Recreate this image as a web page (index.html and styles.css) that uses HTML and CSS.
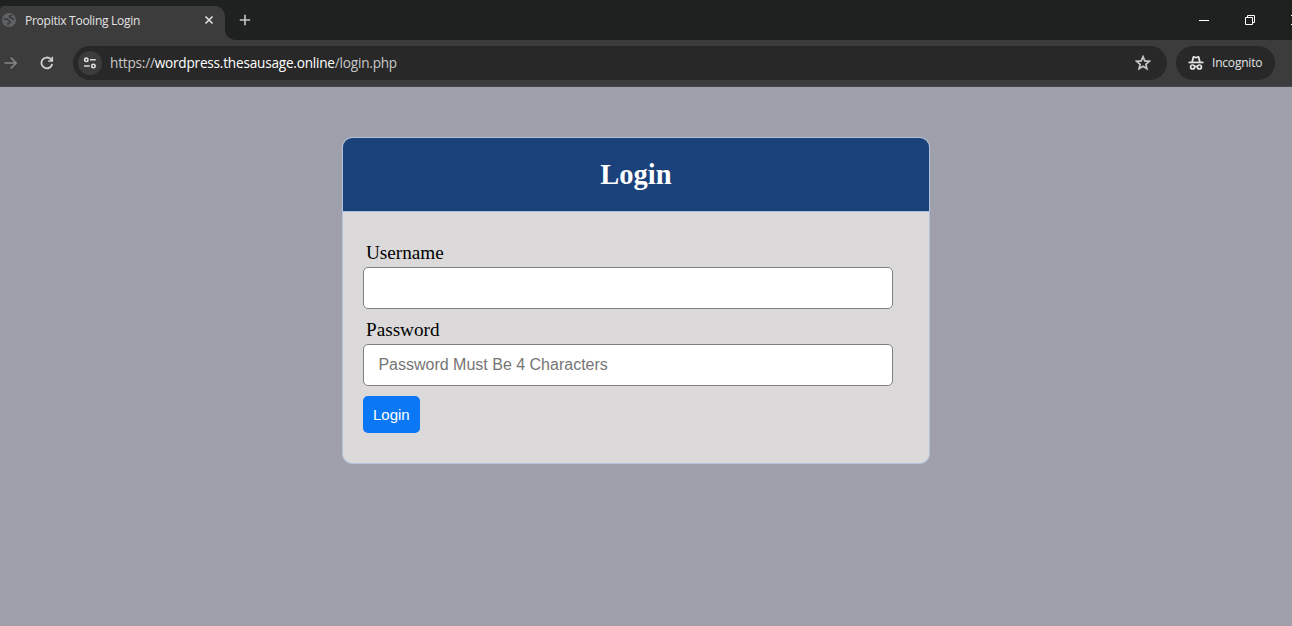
FILE: index.html
```html
<!DOCTYPE html>
<html lang="en">
<head>
<meta charset="utf-8">
<title>Propitix Tooling Login</title>
<link rel="stylesheet" href="styles.css">
</head>
<body>
<div class="tabstrip">
  <div class="tab">
    <svg class="globe" width="16" height="16" viewBox="0 0 16 16"><circle cx="8" cy="8" r="7" fill="#5f6368"/><path d="M2.4 7.2h3.2c1.6 0 1.6 1.6 2.8 1.8 1.4.3 1.2 2.2-.4 2.4l-1 .2v1.8M11 2.9c-.2 1-2.6.6-2.6 1.8 0 1.4 2.2.6 2.8 1.7.3.7 1 .9 2.2.9" fill="none" stroke="#3c3c3c" stroke-width="1.7"/></svg>
    <span class="tab-title">Propitix Tooling Login</span>
    <svg class="tab-close" width="10" height="10" viewBox="0 0 10 10"><path d="M1.5 1.5l7 7M8.5 1.5l-7 7" stroke="#e3e3e3" stroke-width="1.6"/></svg>
  </div>
  <div class="strip-rest">
    <svg class="new-tab" width="12" height="12" viewBox="0 0 12 12"><path d="M6 .8v10.4M.8 6h10.4" stroke="#c7c7c7" stroke-width="1.6"/></svg>
    <div class="window-controls">
      <svg width="10" height="12" viewBox="0 0 10 12"><path d="M0 5.5h10" stroke="#fff"/></svg>
      <svg width="10" height="10" viewBox="0 0 10 10" fill="none" stroke="#fff"><path d="M.5 2.5h7v7h-7zM2.5 2.5v-2h7v7h-2"/></svg>
      <svg width="10" height="10" viewBox="0 0 10 10"><path d="M0 0l10 10M10 0L0 10" stroke="#fff"/></svg>
    </div>
  </div>
</div>
<div class="toolbar">
  <svg class="forward" width="14" height="14" viewBox="0 0 14 14" fill="none" stroke="#858585" stroke-width="1.6"><path d="M.5 7H12M6.8 1.6L12.2 7l-5.4 5.4"/></svg>
  <svg class="reload" width="14" height="14" viewBox="0 0 14 14"><path d="M12.2 7.8A5.4 5.4 0 1 1 10.8 3.2L12.2 4.7" fill="none" stroke="#d0d0d0" stroke-width="1.8"/><path d="M13.1.8v5H8.2V4.2h3.3V.8z" fill="#d0d0d0"/></svg>
  <div class="omnibox">
    <span class="site-info"><svg width="14" height="12" viewBox="0 0 14 12" fill="none" stroke="#dcdcdc" stroke-width="1.6"><circle cx="3.3" cy="2.8" r="1.7"/><path d="M7 2.8h5.7M1 9h5.7"/><circle cx="10.4" cy="9" r="1.7"/></svg></span>
    <span class="url">https://<b>wordpress.thesausage.online</b>/login.php</span>
    <svg class="star" width="16" height="16" viewBox="0 0 16 16"><path d="M8 1.7l1.75 4.2 4.55.4-3.45 3 1.05 4.45L8 11.35l-3.9 2.4L5.15 9.3l-3.45-3 4.55-.4z" fill="none" stroke="#c7c7c7" stroke-width="1.7"/></svg>
  </div>
  <div class="incognito">
    <svg width="16" height="16" viewBox="0 0 16 16"><path d="M.5 6.6h15v1.7H.5z" fill="#e3e3e3"/><path d="M3.2 7L4.6 1.6Q5 .9 5.8 1.1l2.2.6 2.2-.6q.8-.2 1.2.5L12.8 7h-1.9L9.9 3.1 8 3.5l-1.9-.4L5.1 7z" fill="#e3e3e3"/><g fill="none" stroke="#e3e3e3" stroke-width="1.7"><circle cx="4.6" cy="12" r="2"/><circle cx="11.4" cy="12" r="2"/><path d="M6.6 11.8q1.4-.7 2.8 0"/></g></svg>
    <span>Incognito</span>
  </div>
</div>
<main class="page">
  <section class="card">
    <h1 class="card-header">Login</h1>
    <form class="login-form">
      <label class="label" for="username">Username</label>
      <input class="field" id="username" type="text">
      <label class="label" for="password">Password</label>
      <input class="field" id="password" type="password" placeholder="Password Must Be 4 Characters">
      <button class="submit" type="button">Login</button>
    </form>
  </section>
</main>
</body>
</html>
```

FILE: styles.css
```css
* { box-sizing: border-box; }
body {
  margin: 0;
  height: 626px;
  overflow: hidden;
  display: flex;
  flex-direction: column;
  background: #a09fac;
  font-family: "Liberation Serif", "Times New Roman", serif;
}
svg { display: block; flex: none; }
.tabstrip {
  height: 40px;
  flex: none;
  display: flex;
  padding-top: 6px;
  background: linear-gradient(#1f2120 0 6px, #3c3c3c 6px);
  font-family: "Open Sans", "Noto Sans", sans-serif;
}
.tab {
  width: 225px;
  flex: none;
  display: flex;
  align-items: center;
  padding: 0 16px 6px 1px;
  background: #1f2120;
  position: relative;
  z-index: 0;
}
.tab::before {
  content: "";
  position: absolute;
  inset: 0;
  z-index: -1;
  border-radius: 4px 10px 0 0;
  background: #3c3c3c;
}
.tab-title {
  margin-left: 8px;
  padding-top: 1px;
  font-size: 12px;
  letter-spacing: -0.26px;
  color: #e3e3e3;
  white-space: nowrap;
}
.tab-close { margin-left: auto; margin-right: -5px; }
.strip-rest {
  flex: 1;
  min-width: 0;
  display: flex;
  justify-content: space-between;
  padding: 8px 0 0 14px;
  border-bottom-left-radius: 10px;
  background: #1f2120;
}
.window-controls {
  display: flex;
  gap: 36px;
  margin-right: -9px;
  padding-top: 1px;
}
.toolbar {
  height: 47px;
  flex: none;
  display: flex;
  align-items: center;
  padding: 0 17px 1px 4px;
  background: #3c3c3c;
  border-bottom: 1px solid #4a4a4c;
  font-family: "Open Sans", "Noto Sans", sans-serif;
}
.reload { margin-left: 22px; }
.omnibox {
  flex: 1;
  height: 34px;
  margin: 0 9px 0 19px;
  padding: 0 16px 0 5px;
  display: flex;
  align-items: center;
  border-radius: 17px;
  background: #282828;
}
.site-info {
  width: 24px;
  height: 24px;
  display: grid;
  place-items: center;
  border-radius: 50%;
  background: #3c3c3c;
}
.url {
  margin-left: 8px;
  line-height: 20px;
  font-size: 13.6px;
  letter-spacing: -0.21px;
  color: #c7c7c7;
  white-space: nowrap;
}
.url b { font-weight: 400; color: #fff; }
.star { margin-left: auto; }
.incognito {
  width: 99px;
  height: 34px;
  padding-left: 12px;
  display: flex;
  align-items: center;
  gap: 8px;
  border-radius: 17px;
  background: #282828;
  color: #e3e3e3;
  font-size: 12px;
  letter-spacing: -0.2px;
}
.page { flex: 1; padding: 50px 0 0 342px; }
.card {
  width: 588px;
  height: 327px;
  border: 1px solid #b0c4de;
  border-radius: 10px;
  background: #dbd9d9;
  overflow: hidden;
}
.card-header {
  height: 74px;
  margin: 0;
  border-bottom: 1px solid #b0c4de;
  background: #1a4179;
  color: #fff;
  text-align: center;
  font-size: 28.5px;
  line-height: 74px;
}
.login-form {
  display: flex;
  flex-direction: column;
  align-items: flex-start;
  padding: 30px 20px;
}
.label {
  height: 25px;
  margin-left: 3px;
  font-size: 19.2px;
  line-height: 21px;
  color: #000;
}
.field {
  width: 530px;
  height: 42px;
  margin: 0 0 10px;
  padding: 5px 14.4px;
  border: 1px solid gray;
  border-radius: 5px;
  background: #fff;
  font: 16px "Liberation Sans", Arial, sans-serif;
}
.field::placeholder { color: #757575; }
.submit {
  padding: 10px;
  border: 0;
  border-radius: 5px;
  background: #0a78f5;
  color: #fff;
  font: 15px "Liberation Sans", Arial, sans-serif;
}
```
